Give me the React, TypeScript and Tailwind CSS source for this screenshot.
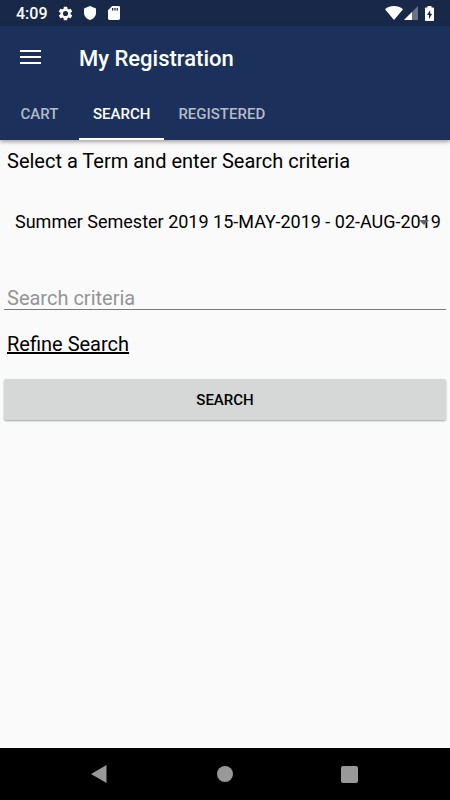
import { useState, type FormEvent } from 'react';

const tabs = ['Cart', 'Search', 'Registered'];

const terms = ['Summer Semester 2019 15-MAY-2019 - 02-AUG-2019'];

function StatusBar() {
  return (
    <div className="flex h-[26px] items-center justify-between bg-[#172848] pr-4 pl-4 text-white">
      <div className="flex items-center">
        <span className="w-[41px] pt-px text-base leading-[26px] font-medium">4:09</span>
        <svg viewBox="0 0 24 24" className="size-[17px]" fill="currentColor" aria-hidden="true">
          <path d="M19.14 12.94c.04-.3.06-.61.06-.94 0-.32-.02-.64-.07-.94l2.03-1.58a.49.49 0 0 0 .12-.61l-1.92-3.32a.49.49 0 0 0-.59-.22l-2.39.96c-.5-.38-1.03-.7-1.62-.94l-.36-2.54a.48.48 0 0 0-.48-.41h-3.84a.47.47 0 0 0-.47.41l-.36 2.54c-.59.24-1.13.57-1.62.94l-2.39-.96a.48.48 0 0 0-.59.22L2.74 8.87a.47.47 0 0 0 .12.61l2.03 1.58c-.05.3-.09.63-.09.94s.02.64.07.94l-2.03 1.58a.49.49 0 0 0-.12.61l1.92 3.32c.12.22.37.29.59.22l2.39-.96c.5.38 1.03.7 1.62.94l.36 2.54c.05.24.24.41.48.41h3.84c.24 0 .44-.17.47-.41l.36-2.54c.59-.24 1.13-.56 1.62-.94l2.39.96c.22.08.47 0 .59-.22l1.92-3.32a.47.47 0 0 0-.12-.61zM12 15.6a3.6 3.6 0 1 1 0-7.2 3.6 3.6 0 0 1 0 7.2z" />
        </svg>
        <svg viewBox="0 0 12 14" className="ml-[10px] h-[14px] w-3" fill="currentColor" aria-hidden="true">
          <path d="M6 0 0 2.4v4.3c0 3.4 2.5 6.4 6 7.3 3.5-.9 6-3.9 6-7.3V2.4z" />
        </svg>
        <svg viewBox="0 0 12 14" className="ml-3 h-[14px] w-3" fill="currentColor" aria-hidden="true">
          <path
            fillRule="evenodd"
            d="M4.2 0h6.3C11.4 0 12 .6 12 1.4v11.2c0 .8-.6 1.4-1.5 1.4h-9C.6 14 0 13.4 0 12.6V4.2zM4 2v2.6h1.3V2zm2.3 0v2.6h1.3V2zm2.3 0v2.6h1.3V2z"
          />
        </svg>
      </div>
      <div className="flex items-center">
        <svg viewBox="0 0 18 14" className="h-[14px] w-[18px]" fill="currentColor" aria-hidden="true">
          <path d="M9 14 0 3.2C2.5 1.1 5.6 0 9 0s6.5 1.1 9 3.2z" />
        </svg>
        <svg viewBox="0 0 14 14" className="ml-px size-[14px]" fill="currentColor" aria-hidden="true">
          <path d="M0 14 14 0v14z" opacity=".35" />
          <path d="M0 14 8 6v8z" />
        </svg>
        <svg viewBox="0 0 9 15" className="ml-[7px] h-[15px] w-[9px]" fill="currentColor" aria-hidden="true">
          <path
            fillRule="evenodd"
            d="M2.5 0h4v1.5H8c.6 0 1 .4 1 1V14c0 .6-.4 1-1 1H1c-.6 0-1-.4-1-1V2.5c0-.6.4-1 1-1h1.5zM5.2 4 2 9h2v4l3.2-5.2h-2z"
          />
        </svg>
      </div>
    </div>
  );
}

function NavigationBar() {
  return (
    <nav className="grid h-[52px] grid-cols-[1fr_16px_1fr] items-center bg-black text-[#999999]">
      <button type="button" aria-label="Back" className="mr-[110px] justify-self-end">
        <svg viewBox="0 0 16 18" className="h-[18px] w-4" fill="currentColor">
          <path d="M15.5 0v18L0 9z" />
        </svg>
      </button>
      <button type="button" aria-label="Home" className="size-4 rounded-full bg-[#999999]" />
      <button type="button" aria-label="Recent apps" className="ml-[108px] size-[17px] rounded-[2px] bg-[#999999]" />
    </nav>
  );
}

export default function App() {
  const [active, setActive] = useState('Search');
  const [term, setTerm] = useState(terms[0]);
  const [criteria, setCriteria] = useState('');

  function handleSearch(event: FormEvent<HTMLFormElement>) {
    event.preventDefault();
  }

  return (
    <div className="flex min-h-screen flex-col bg-[#fafafa] font-['Roboto',sans-serif] text-black">
      <StatusBar />
      <header className="bg-[#1b315b] text-white shadow-[0_2px_4px_rgba(0,0,0,0.35)]">
        <div className="flex h-[62px] items-center pl-5">
          <button type="button" aria-label="Open menu" className="mr-[38px] flex w-[21px] flex-col gap-1">
            <span className="h-[2px] bg-white" />
            <span className="h-[2px] bg-white" />
            <span className="h-[2px] bg-white" />
          </button>
          <h1 className="pt-[3px] text-[22px] leading-8 font-medium">My Registration</h1>
        </div>
        <div role="tablist" className="flex h-[52px]">
          {tabs.map((tab) => (
            <button
              key={tab}
              type="button"
              role="tab"
              aria-selected={tab === active}
              onClick={() => setActive(tab)}
              className={
                tab === active
                  ? 'min-w-[79px] border-b-2 border-white px-[14px] pt-[2px] text-[15px] font-medium text-white uppercase'
                  : 'min-w-[79px] border-b-2 border-transparent px-[14px] pt-[2px] text-[15px] font-medium text-[#b4bac7] uppercase'
              }
            >
              {tab}
            </button>
          ))}
        </div>
      </header>

      <main className="flex-1">
        <form onSubmit={handleSearch} className="flex flex-col px-1">
          <label htmlFor="term" className="mt-[9px] px-[3px] text-xl leading-6">
            Select a Term and enter Search criteria
          </label>
          <div className="relative mt-[33px]">
            <select
              id="term"
              value={term}
              onChange={(event) => setTerm(event.target.value)}
              className="h-8 w-full appearance-none pl-[11px] text-lg outline-none"
            >
              {terms.map((name) => (
                <option key={name}>{name}</option>
              ))}
            </select>
            <svg
              viewBox="0 0 12 6"
              className="pointer-events-none absolute top-[14px] right-4 h-[6px] w-3"
              fill="#616161"
              aria-hidden="true"
            >
              <path d="M1 0h10L6 5z" />
            </svg>
          </div>
          <input
            type="text"
            aria-label="Search criteria"
            placeholder="Search criteria"
            value={criteria}
            onChange={(event) => setCriteria(event.target.value)}
            className="mt-[46px] h-[26px] border-b border-[#7a7a7a] px-[3px] pt-[2px] text-xl leading-6 outline-none placeholder:text-[#949494]"
          />
          <a href="#refine" className="mt-[22px] self-start px-[3px] text-xl leading-6 underline">
            Refine Search
          </a>
          <button
            type="submit"
            className="mt-[23px] h-[41px] rounded-[2px] bg-[#d6d8d7] pt-[2px] text-[15px] font-medium uppercase shadow-[0_1px_2px_rgba(0,0,0,0.35)]"
          >
            Search
          </button>
        </form>
      </main>
      <NavigationBar />
    </div>
  );
}
